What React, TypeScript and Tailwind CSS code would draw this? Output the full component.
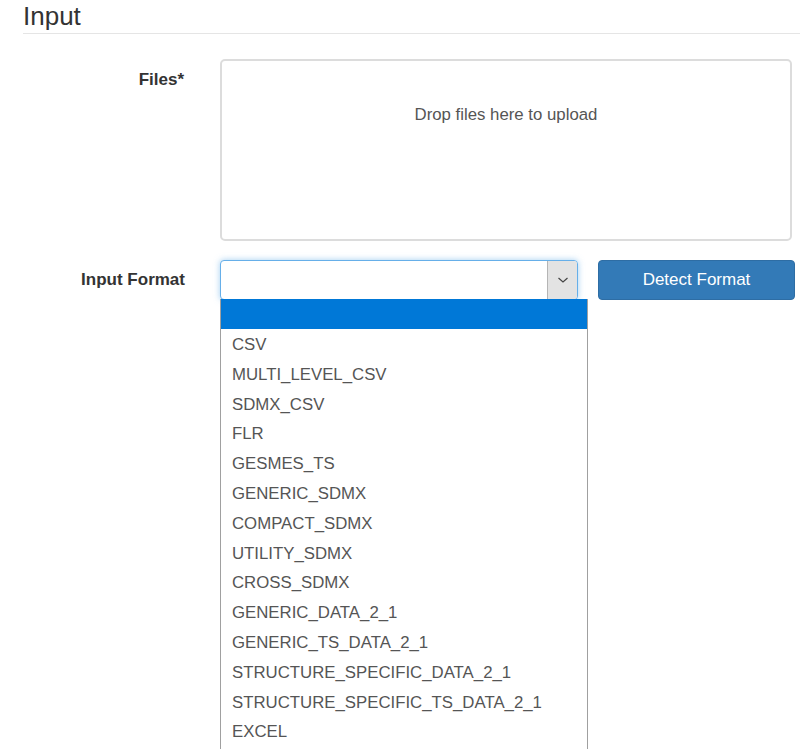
const formats = [
  '',
  'CSV',
  'MULTI_LEVEL_CSV',
  'SDMX_CSV',
  'FLR',
  'GESMES_TS',
  'GENERIC_SDMX',
  'COMPACT_SDMX',
  'UTILITY_SDMX',
  'CROSS_SDMX',
  'GENERIC_DATA_2_1',
  'GENERIC_TS_DATA_2_1',
  'STRUCTURE_SPECIFIC_DATA_2_1',
  'STRUCTURE_SPECIFIC_TS_DATA_2_1',
  'EXCEL',
];

export default function App() {
  return (
    <div className="h-[749px] w-[800px] overflow-hidden bg-white font-['Liberation_Sans',Arial,sans-serif] text-[#333]">
      <div className="pl-[23px]">
        <h2 className="h-[34px] border-b border-[#e5e5e5] pt-[1px] text-[26px] leading-[30px]">Input</h2>
      </div>

      <div className="mt-[25px] flex">
        <label className="w-[184px] pt-[11px] text-right text-[17px] font-bold leading-[20px]">Files*</label>
        <div className="ml-[36px] flex h-[182px] w-[572px] justify-center rounded-[5px] border-2 border-[#dcdcdc] pt-[41px] text-[16.8px] text-[#555]">
          Drop files here to upload
        </div>
      </div>

      <div className="mt-[19px] flex">
        <label className="w-[185px] pt-[10px] text-right text-[17px] font-bold leading-[20px]">Input Format</label>
        <div className="relative ml-[35px] w-[358px]">
          <div className="flex h-[40px] rounded-[4px] border border-[#66afe9] bg-white shadow-[0_0_6px_rgba(102,175,233,0.6)]">
            <div className="flex-1" />
            <div className="flex w-[30px] items-center justify-center rounded-r-[3px] border-l border-[#b5b5b5] bg-[#e3e3e3]">
              <svg width="12" height="8" viewBox="0 0 12 8" fill="none" stroke="#444" strokeWidth="1.2">
                <path d="M1.5 2 L6 6 L10.5 2" />
              </svg>
            </div>
          </div>
          <ul className="absolute left-0 top-[39px] w-[368px] border border-t-0 border-[#a0a0a0] bg-white pb-[20px] text-[16.8px] text-[#555]">
            {formats.map((f, i) => (
              <li
                key={i}
                className={
                  i === 0
                    ? 'h-[30px] bg-[#0078d7] px-[11px] leading-[30px]'
                    : 'h-[29.8px] px-[11px] pt-[1px] leading-[29.8px]'
                }
              >
                {f}
              </li>
            ))}
          </ul>
        </div>
        <button className="ml-[20px] h-[40px] w-[197px] rounded-[4px] border border-[#2e6da4] bg-[#337ab7] text-[17px] text-white">
          Detect Format
        </button>
      </div>
    </div>
  );
}
